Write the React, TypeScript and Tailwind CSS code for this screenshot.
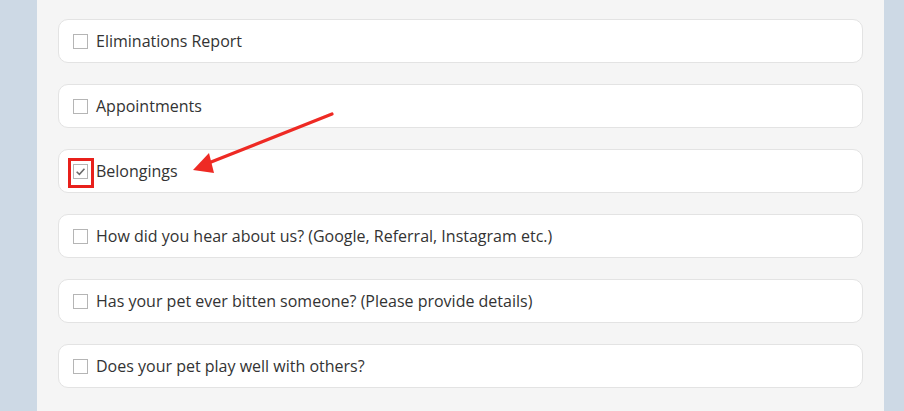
const items = [
  { label: "Eliminations Report", checked: false },
  { label: "Appointments", checked: false },
  { label: "Belongings", checked: true },
  { label: "How did you hear about us? (Google, Referral, Instagram etc.)", checked: false },
  { label: "Has your pet ever bitten someone? (Please provide details)", checked: false },
  { label: "Does your pet play well with others?", checked: false },
];

const Box = ({ checked }: { checked: boolean }) => (
  <span className="relative flex h-[15px] w-[15px] shrink-0 items-center justify-center border border-[#b5b5b5] bg-white">
    {checked && (
      <>
        <svg width="11" height="11" viewBox="0 0 10 10" fill="none">
          <path d="M1.5 5.2 L4 7.6 L8.6 2.4" stroke="#6b6b6b" strokeWidth="1.4" />
        </svg>
        <span className="absolute -left-[6px] -top-[7px] h-[30px] w-[26px] border-[3px] border-[#e8201b]" />
      </>
    )}
  </span>
);

export default function App() {
  return (
    <div
      className="relative flex h-[411px] w-[904px] overflow-hidden bg-[#cdd9e5]"
      style={{ fontFamily: '"Open Sans", "Noto Sans", sans-serif' }}
    >
      <div className="ml-[37px] h-full w-[847px] bg-[#f5f5f5] pl-[21px] pr-[21px] pt-[19px]">
        <div className="flex flex-col gap-[21px]">
          {items.map((it) => (
            <div
              key={it.label}
              className="flex h-[44px] items-center gap-[8px] rounded-[10px] border border-[#e3e3e3] bg-white pl-[14px]"
            >
              <Box checked={it.checked} />
              <span className="text-[16px] text-[#333]">{it.label}</span>
            </div>
          ))}
        </div>
      </div>
      <svg className="pointer-events-none absolute left-0 top-0" width="904" height="411">
        <line x1="332" y1="114" x2="206" y2="164" stroke="#ee2a24" strokeWidth="3.2" strokeLinecap="round" />
        <polygon points="193,170 209,153 214,173" fill="#ee2a24" />
      </svg>
    </div>
  );
}
